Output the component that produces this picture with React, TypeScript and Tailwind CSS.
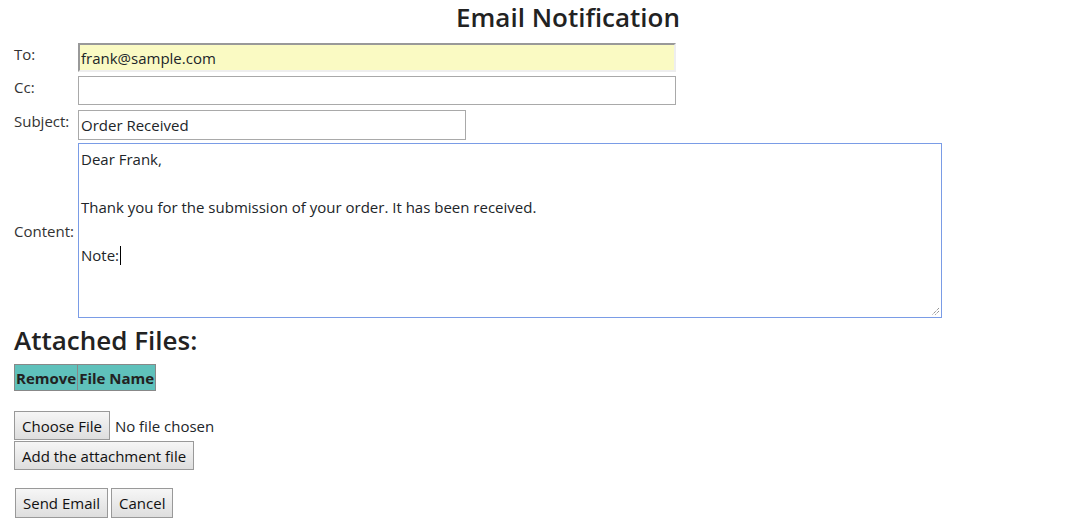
const btn = "h-[29px] px-[7px] border border-[#999] bg-gradient-to-b from-[#f6f6f6] to-[#dedede] text-[#111]"

export default function App() {
  return (
    <div className="w-[1083px] h-[532px] bg-white text-[#212529] font-['Open_Sans',sans-serif] text-[15px] leading-[20px]">
      <h1 className="pl-[456px] pt-[1px] text-[26px] leading-[32px] font-semibold text-[#222]">Email Notification</h1>
      <div className="pl-[14px] pt-[10px] flex flex-col">
        <div className="flex h-[33px]">
          <span className="w-[64px] pt-[1px] text-[#333]">To:</span>
          <input readOnly value="frank@sample.com" className="w-[598px] h-[29px] bg-[#fafac3] border-2 border-t-[#999] border-l-[#999] border-r-[#eee] border-b-[#eee] px-[1px] text-[15px] outline-none" />
        </div>
        <div className="flex h-[34px]">
          <span className="w-[64px] pt-[1px] text-[#333]">Cc:</span>
          <input readOnly value="" className="w-[598px] h-[29px] bg-white border border-[#a9a9a9] px-[2px] outline-none" />
        </div>
        <div className="flex h-[33px]">
          <span className="w-[64px] pt-[1px] text-[#333]">Subject:</span>
          <input readOnly value="Order Received" className="w-[388px] h-[30px] bg-white border border-[#a9a9a9] px-[2px] outline-none" />
        </div>
        <div className="flex items-center h-[175px]">
          <span className="w-[64px] text-[#333]">Content:</span>
          <div className="relative w-[864px] h-[175px] border border-[#7a9ce6] px-[2px] pt-[3px] leading-[24px]">
            <div>Dear Frank,</div>
            <div className="h-[24px]"></div>
            <div>Thank you for the submission of your order. It has been received.</div>
            <div className="h-[24px]"></div>
            <div className="flex items-center">Note:<span className="inline-block w-px h-[19px] bg-black ml-[1px]"></span></div>
            <svg className="absolute right-[1px] bottom-[1px]" width="9" height="9" viewBox="0 0 9 9">
              <path d="M8 1 L1 8 M8 4 L4 8" stroke="#666" strokeWidth="1" strokeDasharray="1 1" />
            </svg>
          </div>
        </div>
        <h2 className="mt-[6px] text-[26px] leading-[32px] font-semibold text-[#222]">Attached Files:</h2>
        <table className="mt-[8px] border-collapse w-max">
          <thead>
            <tr className="bg-[#5fc1bb] h-[26px]">
              <th className="border border-[#888] px-[1px] font-bold text-left text-[15px] text-[#222]">Remove</th>
              <th className="border border-[#888] px-[1px] font-bold text-left text-[15px] text-[#222]">File Name</th>
            </tr>
          </thead>
        </table>
        <div className="mt-[20px] flex items-center gap-[5px]">
          <button className={btn}>Choose File</button>
          <span>No file chosen</span>
        </div>
        <div className="mt-[1px]">
          <button className={btn}>Add the attachment file</button>
        </div>
        <div className="mt-[18px] pl-[1px] flex gap-[3px]">
          <button className={btn + " h-[30px]"}>Send Email</button>
          <button className={btn + " h-[30px]"}>Cancel</button>
        </div>
      </div>
    </div>
  )
}
